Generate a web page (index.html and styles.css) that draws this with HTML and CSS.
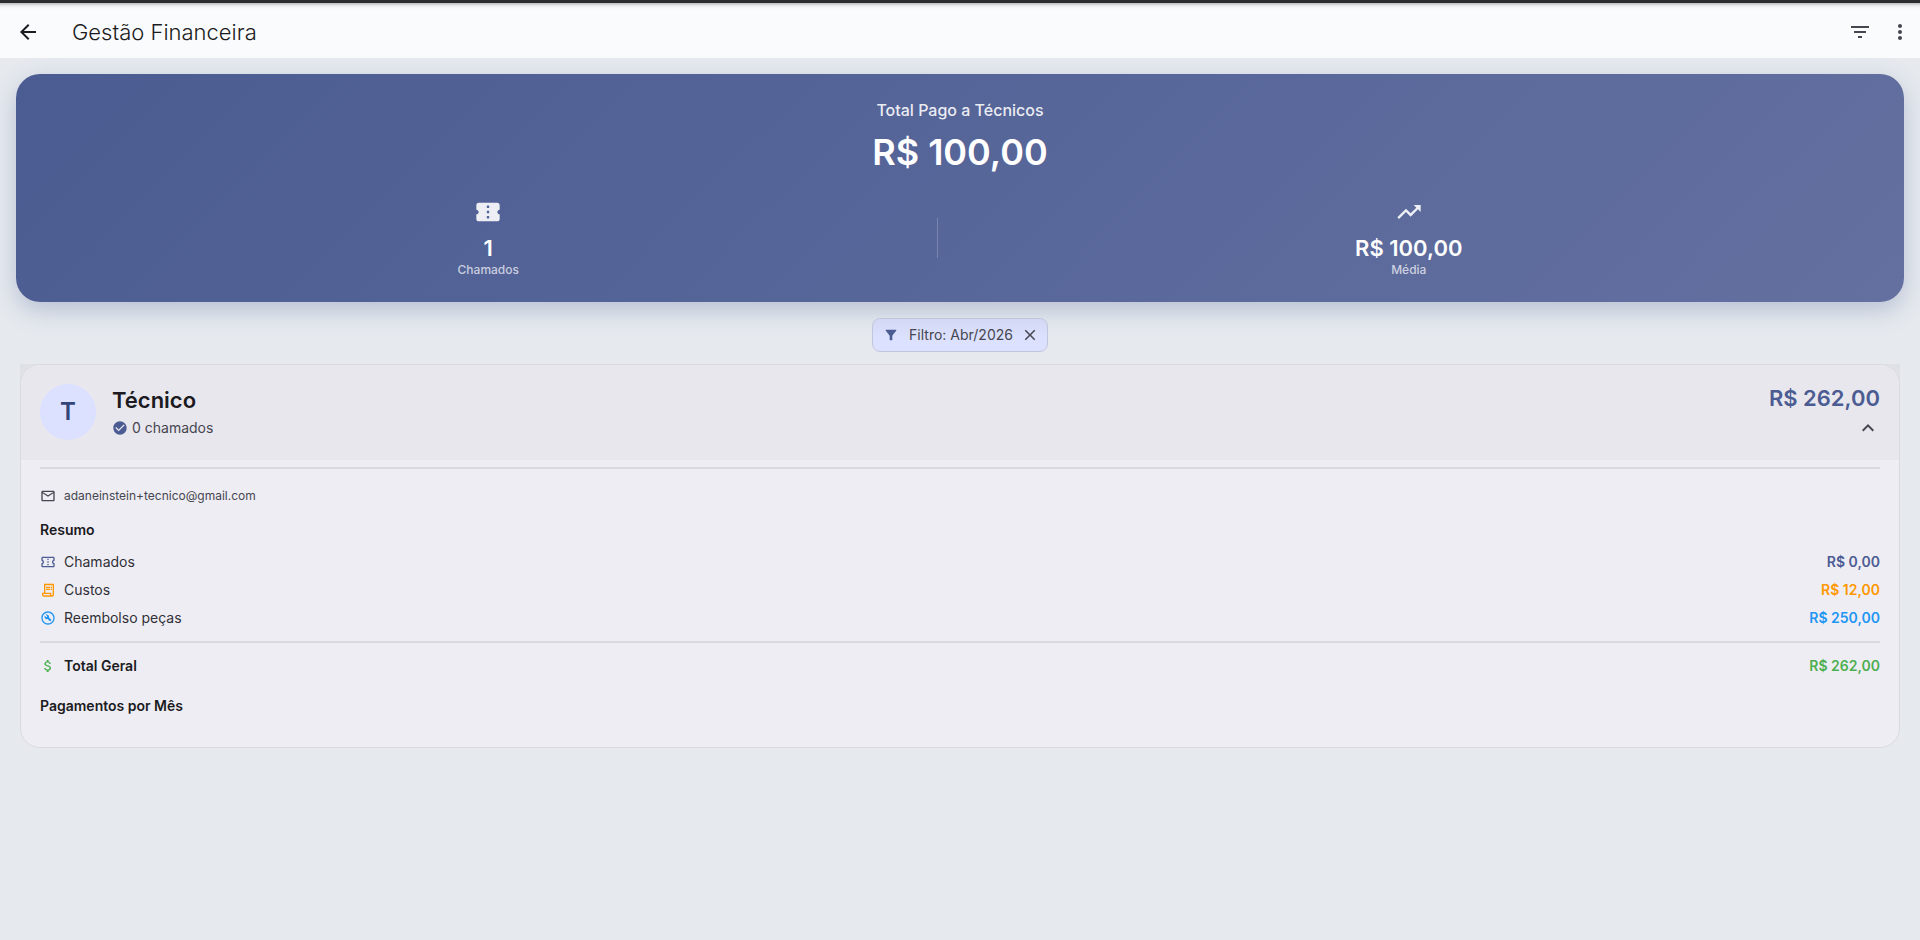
FILE: index.html
```html
<!DOCTYPE html>
<html lang="pt-BR">
<head>
<meta charset="utf-8">
<title>Gestão Financeira</title>
<link rel="stylesheet" href="styles.css">
</head>
<body>
<header class="appbar">
  <button class="icon-button" aria-label="Voltar"><svg class="icon icon-md" viewBox="0 0 24 24"><path d="M20 11H7.83l5.59-5.59L12 4l-8 8 8 8 1.41-1.41L7.83 13H20v-2z"/></svg></button>
  <h1 class="appbar-title">Gestão Financeira</h1>
  <button class="icon-button muted" aria-label="Filtrar"><svg class="icon icon-md" viewBox="0 0 24 24"><path d="M10 18h4v-2h-4v2zM3 6v2h18V6H3zm3 7h12v-2H6v2z"/></svg></button>
  <button class="icon-button narrow muted" aria-label="Mais opções"><svg class="icon icon-md" viewBox="0 0 24 24"><path d="M12 8c1.1 0 2-.9 2-2s-.9-2-2-2-2 .9-2 2 .9 2 2 2zm0 2c-1.1 0-2 .9-2 2s.9 2 2 2 2-.9 2-2-.9-2-2-2zm0 6c-1.1 0-2 .9-2 2s.9 2 2 2 2-.9 2-2-.9-2-2-2z"/></svg></button>
</header>
<main class="content">
  <section class="summary">
    <p class="summary-label">Total Pago a Técnicos</p>
    <p class="summary-total">R$ 100,00</p>
    <div class="stats">
      <div class="stat">
        <svg class="icon icon-lg" viewBox="0 0 24 24"><path d="M22 10V6c0-1.11-.9-2-2-2H4c-1.1 0-1.99.89-1.99 2v4c1.1 0 1.99.9 1.99 2s-.89 2-2 2v4c0 1.1.9 2 2 2h16c1.1 0 2-.9 2-2v-4c-1.1 0-2-.9-2-2s.9-2 2-2zm-9 7.5h-2v-2h2v2zm0-4.5h-2v-2h2v2zm0-4.5h-2v-2h2v2z"/></svg>
        <span class="stat-value">1</span>
        <span class="stat-label">Chamados</span>
      </div>
      <div class="stat-divider"></div>
      <div class="stat">
        <svg class="icon icon-lg" viewBox="0 0 24 24"><path d="M16 6l2.29 2.29-4.88 4.88-4-4L2 16.59 3.41 18l6-6 4 4 6.3-6.29L22 12V6z"/></svg>
        <span class="stat-value">R$ 100,00</span>
        <span class="stat-label">Média</span>
      </div>
    </div>
  </section>

  <div class="chip">
    <svg class="icon icon-xs chip-icon" viewBox="0 0 24 24"><path d="M4.25 5.61C6.27 8.2 10 13 10 13v6c0 .55.45 1 1 1h2c.55 0 1-.45 1-1v-6s3.72-4.8 5.74-7.39c.51-.66.04-1.61-.79-1.61H5.04c-.83 0-1.3.95-.79 1.61z"/></svg>
    <span>Filtro: Abr/2026</span>
    <button class="chip-close" aria-label="Remover filtro"><svg class="icon icon-sm" viewBox="0 0 24 24"><path d="M19 6.41L17.59 5 12 10.59 6.41 5 5 6.41 10.59 12 5 17.59 6.41 19 12 13.41 17.59 19 19 17.59 13.41 12z"/></svg></button>
  </div>

  <div class="card-backdrop">
  <article class="card">
    <button class="card-header" aria-expanded="true">
      <span class="avatar">T</span>
      <span class="person">
        <span class="person-name">Técnico</span>
        <span class="person-meta"><svg class="icon icon-xs" viewBox="0 0 24 24"><path d="M12 2C6.48 2 2 6.48 2 12s4.48 10 10 10 10-4.48 10-10S17.52 2 12 2zm-2 15l-5-5 1.41-1.41L10 14.17l7.59-7.59L19 8l-9 9z"/></svg>0 chamados</span>
      </span>
      <span class="card-side">
        <span class="card-amount">R$ 262,00</span>
        <svg class="icon icon-md" viewBox="0 0 24 24"><path d="M12 8l-6 6 1.41 1.41L12 10.83l4.59 4.58L18 14z"/></svg>
      </span>
    </button>
    <div class="card-body">
      <hr class="rule">
      <p class="line email"><svg class="icon icon-xs" viewBox="0 0 24 24"><path d="M22 6c0-1.1-.9-2-2-2H4c-1.1 0-2 .9-2 2v12c0 1.1.9 2 2 2h16c1.1 0 2-.9 2-2V6zm-2 0l-8 5-8-5h16zm0 12H4V8l8 5 8-5v10z"/></svg>adaneinstein+tecnico@gmail.com</p>
      <h2 class="section-title">Resumo</h2>
      <div class="rows">
        <div class="line indigo"><svg class="icon icon-xs" viewBox="0 0 24 24"><path d="M22 10V6c0-1.11-.9-2-2-2H4c-1.1 0-1.99.89-1.99 2v4c1.1 0 1.99.9 1.99 2s-.89 2-2 2v4c0 1.1.9 2 2 2h16c1.1 0 2-.9 2-2v-4c-1.1 0-2-.9-2-2s.9-2 2-2zm-2-1.46c-1.19.69-2 1.99-2 3.46s.81 2.77 2 3.46V18H4v-2.54c1.19-.69 2-1.99 2-3.46 0-1.48-.8-2.77-1.99-3.46L4 6h16v2.54zM11 15h2v2h-2zm0-4h2v2h-2zm0-4h2v2h-2z"/></svg><span class="line-label">Chamados</span><span class="line-value">R$ 0,00</span></div>
        <div class="line orange"><svg class="icon icon-xs" viewBox="0 0 24 24"><path d="M19.5 3.5L18 2l-1.5 1.5L15 2l-1.5 1.5L12 2l-1.5 1.5L9 2 7.5 3.5 6 2v14H3v3c0 1.66 1.34 3 3 3h12c1.66 0 3-1.34 3-3V2l-1.5 1.5zM15 20H6c-.55 0-1-.45-1-1v-1h10v2zm4-1c0 .55-.45 1-1 1s-1-.45-1-1v-3H8V5h11v14z"/><path d="M9 7h6v2H9zm7 0h2v2h-2zM9 10h6v2H9zm7 0h2v2h-2z"/></svg><span class="line-label">Custos</span><span class="line-value">R$ 12,00</span></div>
        <div class="line blue"><svg class="icon icon-xs" viewBox="0 0 24 24"><path d="M12 2C6.48 2 2 6.48 2 12s4.480 10 10 10 10-4.480 10-10S17.520 2 12 2zm0 18c-4.410 0-8-3.590-8-8s3.590-8 8-8 8 3.590 8 8-3.590 8-8 8z"/><path d="M13.490 11.380c.430-1.220.170-2.640-.810-3.620-1.110-1.110-2.790-1.300-4.100-.590l2.350 2.350-1.410 1.410-2.350-2.350c-.710 1.320-.520 2.990.590 4.100.980.980 2.400 1.240 3.620.810l3.410 3.410c.200.200.510.200.710 0l1.400-1.400c.200-.200.200-.510 0-.710z"/></svg><span class="line-label">Reembolso peças</span><span class="line-value">R$ 250,00</span></div>
      </div>
      <hr class="rule">
      <div class="line total green"><svg class="icon icon-xs" viewBox="0 0 24 24"><path d="M11.800 10.900c-2.270-.590-3-1.200-3-2.150 0-1.090 1.010-1.850 2.700-1.850 1.780 0 2.440.850 2.500 2.100h2.210c-.070-1.720-1.120-3.300-3.210-3.810V3h-3v2.160c-1.940.420-3.500 1.680-3.500 3.610 0 2.310 1.910 3.460 4.700 4.130 2.500.600 3 1.480 3 2.410 0 .690-.490 1.790-2.700 1.790-2.060 0-2.870-.920-2.980-2.100h-2.200c.120 2.190 1.760 3.420 3.680 3.830V21h3v-2.150c1.950-.370 3.500-1.500 3.500-3.550 0-2.840-2.430-3.810-4.700-4.400z"/></svg><span class="line-label">Total Geral</span><span class="line-value">R$ 262,00</span></div>
      <h2 class="section-title">Pagamentos por Mês</h2>
    </div>
  </article>
  </div>
</main>
</body>
</html>
```

FILE: styles.css
```css
* { box-sizing: border-box; }
body {
  margin: 0;
  min-height: 100vh;
  background: #e6eaef;
  color: #1b1b21;
  font-family: Inter, "Liberation Sans", sans-serif;
  font-size: 14px;
  line-height: 20px;
}
h1, h2, p { margin: 0; }
button {
  margin: 0;
  padding: 0;
  border: 0;
  background: none;
  color: inherit;
  font: inherit;
  text-align: left;
  cursor: pointer;
}
.icon { display: block; flex: none; fill: currentColor; }
.icon-xs { width: 16px; height: 16px; }
.icon-sm { width: 18px; height: 18px; }
.icon-md { width: 24px; height: 24px; }
.icon-lg { width: 28px; height: 28px; }

.appbar {
  display: flex;
  align-items: center;
  height: 58px;
  padding: 2px 0 0 4px;
  border-top: 3px solid #2d2d2d;
  background: linear-gradient(#b9babb, #eeeff1 3px, #fafbfd 6px);
}
.appbar-title {
  flex: 1;
  margin-left: 20px;
  font-size: 22px;
  font-weight: 300;
  line-height: 28px;
}
.icon-button { display: grid; place-items: center; width: 48px; height: 48px; }
.narrow { width: 32px; margin-right: 4px; }
.muted { color: #45464f; }

.content { padding: 16px; }
.summary {
  padding: 24px;
  border-radius: 24px;
  background: linear-gradient(135deg, #4b5c92, #6370a0);
  box-shadow: 0 8px 24px rgba(75, 92, 146, 0.3);
  color: #fff;
  text-align: center;
}
.summary-label { color: rgba(255, 255, 255, 0.9); font-size: 16px; font-weight: 500; line-height: 24px; }
.summary-total { margin: 8px 0 24px; font-size: 36px; font-weight: 600; line-height: 44px; }
.stats { display: flex; justify-content: space-evenly; align-items: center; }
.stat { display: flex; flex-direction: column; align-items: center; }
.stat .icon { color: rgba(255, 255, 255, 0.9); }
.stat-value { margin-top: 8px; font-size: 22px; font-weight: 600; line-height: 28px; }
.stat-label { color: rgba(255, 255, 255, 0.7); font-size: 12px; font-weight: 500; line-height: 16px; }
.stat-divider { width: 1px; height: 40px; background: rgba(255, 255, 255, 0.2); }

.chip {
  display: flex;
  align-items: center;
  width: fit-content;
  height: 34px;
  margin: 16px auto 12px;
  padding: 0 8px 0 10px;
  border: 1px solid #c2c6dd;
  border-radius: 8px;
  background: linear-gradient(#d3d8f4, #dce1ff 60%);
  color: #45464f;
}
.chip-icon { margin-right: 10px; color: #4b5c92; }
.chip-close { margin-left: 8px; }

.card-backdrop {
  margin: 0 4px;
  background: linear-gradient(#dee2e7, #dee2e7) top / 100% 96px no-repeat;
}
.card {
  overflow: hidden;
  border: 1px solid #dad9df;
  border-radius: 20px;
  background: #efedf4;
}
.card-header {
  display: flex;
  align-items: flex-start;
  width: 100%;
  height: 95px;
  padding: 19px;
  background: #e9e7ee;
}
.avatar {
  display: grid;
  place-items: center;
  width: 56px;
  height: 56px;
  border-radius: 50%;
  background: #dce1ff;
  color: #334478;
  font-size: 24px;
  font-weight: 600;
}
.person { flex: 1; margin-left: 16px; padding-top: 2px; }
.person-name { display: block; font-size: 22px; font-weight: 600; line-height: 28px; }
.person-meta { display: flex; align-items: center; gap: 4px; margin-top: 4px; color: #45464f; }
.person-meta .icon { color: #4b5c92; }
.card-side { display: flex; flex-direction: column; align-items: flex-end; gap: 4px; color: #45464f; }
.card-amount { color: #4b5c92; font-size: 22px; font-weight: 600; line-height: 28px; }
.card-body { padding: 7px 19px 31px; }
.rule { height: 2px; margin: 0; border: 0; background: #dad9e0; }
.line { display: flex; align-items: center; gap: 8px; }
.line-label { flex: 1; color: #303037; }
.line-value { font-weight: 600; }
.email { margin: 19px 0 16px; color: #45464f; font-size: 12px; line-height: 16px; }
.section-title { font-size: 14px; font-weight: 600; line-height: 20px; }
.rows { display: flex; flex-direction: column; gap: 8px; margin: 12px 0 13px; }
.total { margin: 13px 0 20px; }
.total .line-label { color: #1b1b21; font-weight: 600; }
.indigo { color: #4b5c92; }
.orange { color: #ff9800; }
.blue { color: #2196f3; }
.green { color: #4caf50; }
```
